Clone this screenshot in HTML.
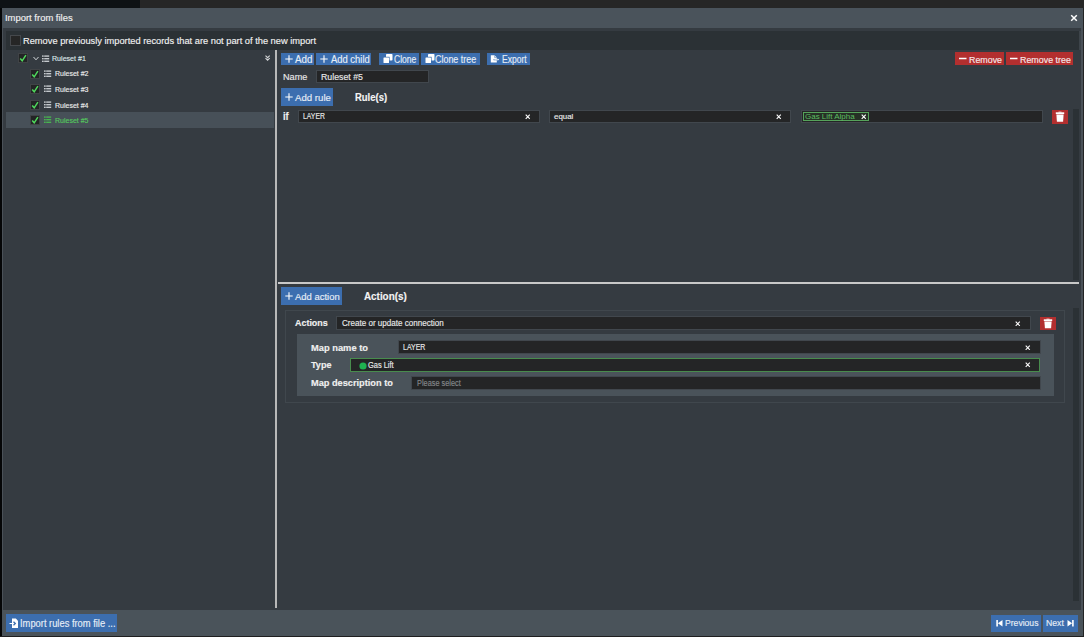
<!DOCTYPE html>
<html><head><meta charset="utf-8">
<style>
*{box-sizing:border-box;margin:0;padding:0}
html,body{width:1084px;height:637px;overflow:hidden;background:#050607;font-family:"Liberation Sans",sans-serif}
.a{position:absolute;display:block}
.t{position:absolute;white-space:nowrap;-webkit-text-stroke-width:0.15px}
</style></head><body>
<div class="a" style="left:0px;top:0px;width:140px;height:8px;background:#0e1215;"></div>
<div class="a" style="left:140px;top:0px;width:944px;height:8px;background:#262626;"></div>
<div class="a" style="left:1083px;top:8px;width:1px;height:629px;background:#232425;"></div>
<div class="a" style="left:2px;top:8px;width:1081px;height:628px;background:#4a5158;"></div>
<div class="a" style="left:2px;top:8px;width:1081px;height:20px;background:#4a535b;"></div>
<div class="t" style="left:5px;top:8px;font-size:9.3px;line-height:20px;color:#f0f0f0;transform:scaleX(1.015);transform-origin:0 0;">Import from files</div>
<svg class="a" style="left:1070px;top:14px;" width="8" height="8" viewBox="0 0 8 8"><path d="M1.2 1.2L6.8 6.8M6.8 1.2L1.2 6.8" stroke="#fff" stroke-width="1.5"/></svg>
<div class="a" style="left:3px;top:28px;width:1078px;height:582px;background:#353b41;"></div>
<div class="a" style="left:6px;top:31px;width:1073px;height:19px;background:#2b3135;"></div>
<div class="a" style="left:1079px;top:31px;width:2px;height:19px;background:#3d444a;"></div>
<div class="a" style="left:10px;top:35px;width:11px;height:11px;background:#45484c;"></div>
<div class="a" style="left:11px;top:36px;width:9px;height:9px;background:#262626;"></div>
<div class="t" style="left:23px;top:31px;font-size:9.4px;line-height:20px;color:#f0f0f0;transform:scaleX(0.990);transform-origin:0 0;">Remove previously imported records that are not part of the new import</div>
<div class="a" style="left:6px;top:112px;width:268px;height:16px;background:#475058;"></div>
<div class="a" style="left:18px;top:53px;width:10px;height:10px;background:#404346;"></div>
<div class="a" style="left:19px;top:54px;width:8px;height:8px;background:#232425;"></div>
<svg class="a" style="left:19px;top:54px;" width="8" height="8" viewBox="0 0 8 8"><path d="M1.2 4.4L3.2 6.8L6.9 1.2" fill="none" stroke="#4fd85c" stroke-width="1.5"/></svg>
<svg class="a" style="left:33px;top:56px;" width="6" height="5" viewBox="0 0 6 5"><path d="M0.5 1L3 3.8L5.5 1" fill="none" stroke="#cfd3d6" stroke-width="1"/></svg>
<svg class="a" style="left:42px;top:55px;" width="8" height="8" viewBox="0 0 8 8"><g fill="#c4c8cc"><rect x="0" y="0.4" width="1.7" height="1.4"/><rect x="2.2" y="0.4" width="5" height="1.4"/><rect x="0" y="3.0" width="1.7" height="1.4"/><rect x="2.2" y="3.0" width="5" height="1.4"/><rect x="0" y="5.6" width="1.7" height="1.4"/><rect x="2.2" y="5.6" width="5" height="1.4"/></g></svg>
<div class="t" style="left:52px;top:49px;font-size:8.1px;line-height:20px;color:#dfe8ea;transform:scaleX(0.875);transform-origin:0 0;">Ruleset #1</div>
<svg class="a" style="left:265px;top:54.5px;" width="6" height="6.5" viewBox="0 0 6 6.5"><path d="M0.5 0.7L2.6 2.7L4.7 0.7M0.5 3.2L2.6 5.2L4.7 3.2" fill="none" stroke="#d4d6d8" stroke-width="1.1"/></svg>
<div class="a" style="left:30px;top:69px;width:10px;height:10px;background:#404346;"></div>
<div class="a" style="left:31px;top:70px;width:8px;height:8px;background:#232425;"></div>
<svg class="a" style="left:31px;top:70px;" width="8" height="8" viewBox="0 0 8 8"><path d="M1.2 4.4L3.2 6.8L6.9 1.2" fill="none" stroke="#4fd85c" stroke-width="1.5"/></svg>
<svg class="a" style="left:44px;top:70px;" width="8" height="8" viewBox="0 0 8 8"><g fill="#c4c8cc"><rect x="0" y="0.4" width="1.7" height="1.4"/><rect x="2.2" y="0.4" width="5" height="1.4"/><rect x="0" y="3.0" width="1.7" height="1.4"/><rect x="2.2" y="3.0" width="5" height="1.4"/><rect x="0" y="5.6" width="1.7" height="1.4"/><rect x="2.2" y="5.6" width="5" height="1.4"/></g></svg>
<div class="t" style="left:55px;top:64px;font-size:8.1px;line-height:20px;color:#ececec;transform:scaleX(0.865);transform-origin:0 0;">Ruleset #2</div>
<div class="a" style="left:30px;top:84px;width:10px;height:10px;background:#404346;"></div>
<div class="a" style="left:31px;top:85px;width:8px;height:8px;background:#232425;"></div>
<svg class="a" style="left:31px;top:85px;" width="8" height="8" viewBox="0 0 8 8"><path d="M1.2 4.4L3.2 6.8L6.9 1.2" fill="none" stroke="#4fd85c" stroke-width="1.5"/></svg>
<svg class="a" style="left:44px;top:85px;" width="8" height="8" viewBox="0 0 8 8"><g fill="#c4c8cc"><rect x="0" y="0.4" width="1.7" height="1.4"/><rect x="2.2" y="0.4" width="5" height="1.4"/><rect x="0" y="3.0" width="1.7" height="1.4"/><rect x="2.2" y="3.0" width="5" height="1.4"/><rect x="0" y="5.6" width="1.7" height="1.4"/><rect x="2.2" y="5.6" width="5" height="1.4"/></g></svg>
<div class="t" style="left:55px;top:80px;font-size:8.1px;line-height:20px;color:#ececec;transform:scaleX(0.865);transform-origin:0 0;">Ruleset #3</div>
<div class="a" style="left:30px;top:100px;width:10px;height:10px;background:#404346;"></div>
<div class="a" style="left:31px;top:101px;width:8px;height:8px;background:#232425;"></div>
<svg class="a" style="left:31px;top:101px;" width="8" height="8" viewBox="0 0 8 8"><path d="M1.2 4.4L3.2 6.8L6.9 1.2" fill="none" stroke="#4fd85c" stroke-width="1.5"/></svg>
<svg class="a" style="left:44px;top:101px;" width="8" height="8" viewBox="0 0 8 8"><g fill="#c4c8cc"><rect x="0" y="0.4" width="1.7" height="1.4"/><rect x="2.2" y="0.4" width="5" height="1.4"/><rect x="0" y="3.0" width="1.7" height="1.4"/><rect x="2.2" y="3.0" width="5" height="1.4"/><rect x="0" y="5.6" width="1.7" height="1.4"/><rect x="2.2" y="5.6" width="5" height="1.4"/></g></svg>
<div class="t" style="left:55px;top:96px;font-size:8.1px;line-height:20px;color:#ececec;transform:scaleX(0.865);transform-origin:0 0;">Ruleset #4</div>
<div class="a" style="left:30px;top:115px;width:10px;height:10px;background:#404346;"></div>
<div class="a" style="left:31px;top:116px;width:8px;height:8px;background:#232425;"></div>
<svg class="a" style="left:31px;top:116px;" width="8" height="8" viewBox="0 0 8 8"><path d="M1.2 4.4L3.2 6.8L6.9 1.2" fill="none" stroke="#4fd85c" stroke-width="1.5"/></svg>
<svg class="a" style="left:44px;top:116px;" width="8" height="8" viewBox="0 0 8 8"><g fill="#48b250"><rect x="0" y="0.4" width="1.7" height="1.4"/><rect x="2.2" y="0.4" width="5" height="1.4"/><rect x="0" y="3.0" width="1.7" height="1.4"/><rect x="2.2" y="3.0" width="5" height="1.4"/><rect x="0" y="5.6" width="1.7" height="1.4"/><rect x="2.2" y="5.6" width="5" height="1.4"/></g></svg>
<div class="t" style="left:55px;top:111px;font-size:8.1px;line-height:20px;color:#55c95e;transform:scaleX(0.865);transform-origin:0 0;">Ruleset #5</div>
<div class="a" style="left:275px;top:50px;width:2px;height:558px;background:#b8b8b8;"></div>
<div class="a" style="left:281px;top:53px;width:33px;height:12px;background:#3c6eaf;"></div>
<svg class="a" style="left:285px;top:54.5px;" width="8" height="8" viewBox="0 0 8 8"><path d="M4 0.3V7.7M0.3 4H7.7" stroke="#fff" stroke-width="1.1"/></svg>
<div class="t" style="left:295px;top:50px;font-size:10px;line-height:20px;color:#e6edf6;transform:scaleX(0.981);transform-origin:0 0;">Add</div>
<div class="a" style="left:316px;top:53px;width:55px;height:12px;background:#3c6eaf;"></div>
<svg class="a" style="left:320px;top:54.5px;" width="8" height="8" viewBox="0 0 8 8"><path d="M4 0.3V7.7M0.3 4H7.7" stroke="#fff" stroke-width="1.1"/></svg>
<div class="t" style="left:330.5px;top:50px;font-size:10px;line-height:20px;color:#e6edf6;transform:scaleX(0.941);transform-origin:0 0;">Add child</div>
<div class="a" style="left:379px;top:53px;width:40px;height:12px;background:#3c6eaf;"></div>
<svg class="a" style="left:382.5px;top:54px;" width="10" height="10" viewBox="0 0 10 10"><rect x="3" y="0" width="6.5" height="6.5" rx="0.8" fill="#fff"/><rect x="-0.2" y="2.8" width="6.8" height="6.8" fill="#3c6eaf"/><rect x="0.5" y="3.5" width="5.5" height="5.5" rx="0.5" fill="#fff"/></svg>
<div class="t" style="left:394px;top:50px;font-size:10px;line-height:20px;color:#e6edf6;transform:scaleX(0.854);transform-origin:0 0;">Clone</div>
<div class="a" style="left:421px;top:53px;width:59px;height:12px;background:#3c6eaf;"></div>
<svg class="a" style="left:424.5px;top:54px;" width="10" height="10" viewBox="0 0 10 10"><rect x="3" y="0" width="6.5" height="6.5" rx="0.8" fill="#fff"/><rect x="-0.2" y="2.8" width="6.8" height="6.8" fill="#3c6eaf"/><rect x="0.5" y="3.5" width="5.5" height="5.5" rx="0.5" fill="#fff"/></svg>
<div class="t" style="left:435px;top:50px;font-size:10px;line-height:20px;color:#e6edf6;transform:scaleX(0.893);transform-origin:0 0;">Clone tree</div>
<div class="a" style="left:487px;top:53px;width:43px;height:12px;background:#3c6eaf;"></div>
<svg class="a" style="left:490px;top:54.5px;" width="10" height="8" viewBox="0 0 10 8"><path d="M0.8 0.3H4.6L6.8 2.5V7.6H0.8Z" fill="#fff"/><path d="M4.6 0.3V2.5H6.8" fill="none" stroke="#3c6eaf" stroke-width="0.5"/><path d="M3.6 4.6H7.4" stroke="#3c6eaf" stroke-width="1.3"/><path d="M4.2 4.6H7.8" stroke="#fff" stroke-width="0.8"/><path d="M7.6 3.4L9.2 4.6L7.6 5.8Z" fill="#fff"/></svg>
<div class="t" style="left:502px;top:50px;font-size:10px;line-height:20px;color:#e6edf6;transform:scaleX(0.855);transform-origin:0 0;">Export</div>
<div class="a" style="left:955px;top:52px;width:49px;height:13px;background:#b32f2f;"></div>
<svg class="a" style="left:959px;top:57px;" width="8" height="3" viewBox="0 0 8 3"><path d="M0 1.5H7.5" stroke="#fff" stroke-width="1.5"/></svg>
<div class="t" style="left:968.7px;top:50px;font-size:9.6px;line-height:20px;color:#f6e9e9;transform:scaleX(0.924);transform-origin:0 0;">Remove</div>
<div class="a" style="left:1006px;top:52px;width:67px;height:13px;background:#b32f2f;"></div>
<svg class="a" style="left:1010px;top:57px;" width="8" height="3" viewBox="0 0 8 3"><path d="M0 1.5H7.5" stroke="#fff" stroke-width="1.5"/></svg>
<div class="t" style="left:1020px;top:50px;font-size:9.6px;line-height:20px;color:#f6e9e9;transform:scaleX(0.927);transform-origin:0 0;">Remove tree</div>
<div class="t" style="left:282.6px;top:67px;font-size:9px;line-height:20px;color:#e8e8e8;transform:scaleX(1.012);transform-origin:0 0;">Name</div>
<div class="a" style="left:316px;top:70px;width:112.5px;height:13px;background:#41474d;"></div>
<div class="a" style="left:317px;top:71px;width:110.5px;height:11px;background:#242526;"></div>
<div class="t" style="left:320.8px;top:67px;font-size:9px;line-height:20px;color:#e8e8e8;transform:scaleX(0.976);transform-origin:0 0;">Ruleset #5</div>
<div class="a" style="left:281px;top:88px;width:52px;height:18px;background:#3c6eaf;"></div>
<svg class="a" style="left:285px;top:93px;" width="8" height="8" viewBox="0 0 8 8"><path d="M4 0.3V7.7M0.3 4H7.7" stroke="#fff" stroke-width="1.1"/></svg>
<div class="t" style="left:294.9px;top:88px;font-size:9.7px;line-height:20px;color:#e6edf6;transform:scaleX(0.995);transform-origin:0 0;">Add rule</div>
<div class="t" style="left:354.7px;top:87px;font-size:10.7px;line-height:20px;color:#f4f4f4;font-weight:bold;transform:scaleX(0.886);transform-origin:0 0;">Rule(s)</div>
<div class="t" style="left:282.7px;top:107px;font-size:10px;line-height:20px;color:#f0f0f0;font-weight:bold;transform:scaleX(0.929);transform-origin:0 0;">if</div>
<div class="a" style="left:298px;top:110px;width:242px;height:13px;background:#41474d;"></div>
<div class="a" style="left:299px;top:111px;width:240px;height:11px;background:#242526;"></div>
<div class="t" style="left:303.4px;top:106px;font-size:8.4px;line-height:20px;color:#e8e8e8;transform:scaleX(0.814);transform-origin:0 0;">LAYER</div>
<svg class="a" style="left:524.5px;top:114px;" width="5.5" height="5.5" viewBox="0 0 5.5 5.5"><path d="M0.7 0.7L4.8 4.8M4.8 0.7L0.7 4.8" stroke="#fff" stroke-width="1.1"/></svg>
<div class="a" style="left:549px;top:110px;width:242px;height:13px;background:#41474d;"></div>
<div class="a" style="left:550px;top:111px;width:240px;height:11px;background:#242526;"></div>
<div class="t" style="left:554.4px;top:107px;font-size:8.0px;line-height:20px;color:#e8e8e8;transform:scaleX(0.990);transform-origin:0 0;">equal</div>
<svg class="a" style="left:776px;top:114px;" width="5.5" height="5.5" viewBox="0 0 5.5 5.5"><path d="M0.7 0.7L4.8 4.8M4.8 0.7L0.7 4.8" stroke="#fff" stroke-width="1.1"/></svg>
<div class="a" style="left:801px;top:110px;width:242px;height:13px;background:#41474d;"></div>
<div class="a" style="left:802px;top:111px;width:240px;height:11px;background:#242526;"></div>
<div class="a" style="left:803px;top:111.5px;width:66px;height:9.5px;background:#56a35b;"></div>
<div class="a" style="left:804px;top:112.5px;width:64px;height:7.5px;background:#263026;"></div>
<div class="t" style="left:805px;top:107px;font-size:7.8px;line-height:20px;color:#5dbd63;-webkit-text-stroke-width:0;transform:scaleX(1.023);transform-origin:0 0;">Gas Lift Alpha</div>
<svg class="a" style="left:860.5px;top:114px;" width="5.5" height="5.5" viewBox="0 0 5.5 5.5"><path d="M0.7 0.7L4.8 4.8M4.8 0.7L0.7 4.8" stroke="#fff" stroke-width="1.1"/></svg>
<div class="a" style="left:1052px;top:110px;width:16px;height:14px;background:#b32f2f;"></div>
<svg class="a" style="left:1052px;top:110px;" width="16" height="14" viewBox="0 0 16 14"><path d="M3.7999999999999545 2.3H12.200000000000045V4.1H3.7999999999999545Z" fill="#fff"/><path d="M6.5 1.7H9.5V2.5H6.5Z" fill="#fff"/><path d="M4.400000000000091 4.4H11.599999999999909L11.099999999999909 11.8H4.900000000000091Z" fill="#fff"/></svg>
<div class="a" style="left:1073px;top:109px;width:6px;height:171px;background:#2b3135;"></div>
<div class="a" style="left:278px;top:282px;width:801px;height:2px;background:#c8c8c8;"></div>
<div class="a" style="left:281px;top:287px;width:61px;height:18px;background:#3c6eaf;"></div>
<svg class="a" style="left:285px;top:292px;" width="8" height="8" viewBox="0 0 8 8"><path d="M4 0.3V7.7M0.3 4H7.7" stroke="#fff" stroke-width="1.1"/></svg>
<div class="t" style="left:294.9px;top:287px;font-size:9.7px;line-height:20px;color:#e6edf6;transform:scaleX(0.976);transform-origin:0 0;">Add action</div>
<div class="t" style="left:364px;top:286px;font-size:11px;line-height:20px;color:#f4f4f4;font-weight:bold;transform:scaleX(0.896);transform-origin:0 0;">Action(s)</div>
<div class="a" style="left:285px;top:310px;width:780px;height:93px;background:#40474d;"></div>
<div class="a" style="left:286px;top:311px;width:778px;height:91px;background:#353b41;"></div>
<div class="t" style="left:294.7px;top:313px;font-size:9.7px;line-height:20px;color:#f0f0f0;font-weight:bold;transform:scaleX(0.922);transform-origin:0 0;">Actions</div>
<div class="a" style="left:336px;top:316px;width:695px;height:14px;background:#41474d;"></div>
<div class="a" style="left:337px;top:317px;width:693px;height:12px;background:#242526;"></div>
<div class="t" style="left:341.5px;top:313px;font-size:9px;line-height:20px;color:#e8e8e8;transform:scaleX(0.895);transform-origin:0 0;">Create or update connection</div>
<svg class="a" style="left:1015px;top:320.5px;" width="5.5" height="5.5" viewBox="0 0 5.5 5.5"><path d="M0.7 0.7L4.8 4.8M4.8 0.7L0.7 4.8" stroke="#fff" stroke-width="1.1"/></svg>
<div class="a" style="left:1040px;top:316.5px;width:16px;height:13.5px;background:#b32f2f;"></div>
<svg class="a" style="left:1040px;top:316.5px;" width="16" height="13.5" viewBox="0 0 16 13.5"><path d="M3.7999999999999545 2.3H12.200000000000045V4.1H3.7999999999999545Z" fill="#fff"/><path d="M6.5 1.7H9.5V2.5H6.5Z" fill="#fff"/><path d="M4.400000000000091 4.4H11.599999999999909L11.099999999999909 11.3H4.900000000000091Z" fill="#fff"/></svg>
<div class="a" style="left:297px;top:334px;width:757px;height:62px;background:#4a535a;"></div>
<div class="t" style="left:311px;top:338px;font-size:9.4px;line-height:20px;color:#f0f0f0;font-weight:bold;transform:scaleX(0.994);transform-origin:0 0;">Map name to</div>
<div class="a" style="left:398px;top:340px;width:643px;height:14px;background:#41474d;"></div>
<div class="a" style="left:399px;top:341px;width:641px;height:12px;background:#242526;"></div>
<div class="t" style="left:403.1px;top:337px;font-size:8.6px;line-height:20px;color:#e8e8e8;transform:scaleX(0.812);transform-origin:0 0;">LAYER</div>
<svg class="a" style="left:1025px;top:344.5px;" width="5.5" height="5.5" viewBox="0 0 5.5 5.5"><path d="M0.7 0.7L4.8 4.8M4.8 0.7L0.7 4.8" stroke="#fff" stroke-width="1.1"/></svg>
<div class="t" style="left:311px;top:355px;font-size:9.4px;line-height:20px;color:#f0f0f0;font-weight:bold;transform:scaleX(0.968);transform-origin:0 0;">Type</div>
<div class="a" style="left:350px;top:358px;width:690px;height:14px;background:#488c4d;"></div>
<div class="a" style="left:351px;top:359px;width:688px;height:12px;background:#242526;"></div>
<svg class="a" style="left:358.5px;top:361.5px;" width="8" height="8" viewBox="0 0 8 8"><circle cx="4" cy="4" r="3.6" fill="#1eb050"/></svg>
<div class="t" style="left:367.7px;top:356px;font-size:8.2px;line-height:20px;color:#e8e8e8;transform:scaleX(0.909);transform-origin:0 0;">Gas Lift</div>
<svg class="a" style="left:1025px;top:362px;" width="5.5" height="5.5" viewBox="0 0 5.5 5.5"><path d="M0.7 0.7L4.8 4.8M4.8 0.7L0.7 4.8" stroke="#fff" stroke-width="1.1"/></svg>
<div class="t" style="left:311px;top:373px;font-size:9.4px;line-height:20px;color:#f0f0f0;font-weight:bold;transform:scaleX(0.982);transform-origin:0 0;">Map description to</div>
<div class="a" style="left:411px;top:376px;width:630px;height:14px;background:#41474d;"></div>
<div class="a" style="left:412px;top:377px;width:628px;height:12px;background:#242526;"></div>
<div class="t" style="left:416.9px;top:373px;font-size:8.5px;line-height:20px;color:#85888b;transform:scaleX(0.865);transform-origin:0 0;">Please select</div>
<div class="a" style="left:1073px;top:308px;width:6px;height:293px;background:#2b3135;"></div>
<div class="a" style="left:2px;top:610px;width:1081px;height:26px;background:#4a535a;"></div>
<div class="a" style="left:6px;top:614px;width:111px;height:18px;background:#3c6eaf;"></div>
<svg class="a" style="left:9px;top:618px;" width="11" height="11" viewBox="0 0 11 11"><path d="M3 0.5H6.8L9 2.7V10H3Z" fill="#fff"/><path d="M0.5 5.5H6" stroke="#fff" stroke-width="1"/><path d="M4.5 3.8L6.3 5.5L4.5 7.2" fill="none" stroke="#3c6eaf" stroke-width="1.3"/></svg>
<div class="t" style="left:19.8px;top:614px;font-size:10.4px;line-height:20px;color:#e6edf6;transform:scaleX(0.899);transform-origin:0 0;">Import rules from file ...</div>
<div class="a" style="left:991px;top:614.5px;width:50px;height:17.5px;background:#3c6eaf;"></div>
<svg class="a" style="left:995.5px;top:620px;" width="7" height="7" viewBox="0 0 7 7"><rect x="0.3" y="0" width="1.6" height="6.5" fill="#fff"/><path d="M6.5 0V6.5L1.9 3.25Z" fill="#fff"/></svg>
<div class="t" style="left:1004.8px;top:613px;font-size:9px;line-height:20px;color:#e6edf6;transform:scaleX(0.955);transform-origin:0 0;">Previous</div>
<div class="a" style="left:1043px;top:614.5px;width:35px;height:17.5px;background:#3c6eaf;"></div>
<div class="t" style="left:1046px;top:613px;font-size:9px;line-height:20px;color:#e6edf6;transform:scaleX(0.963);transform-origin:0 0;">Next</div>
<svg class="a" style="left:1066.5px;top:620px;" width="7" height="7" viewBox="0 0 7 7"><rect x="5.1" y="0" width="1.6" height="6.5" fill="#fff"/><path d="M0.5 0V6.5L5.1 3.25Z" fill="#fff"/></svg>
<div class="a" style="left:0px;top:636px;width:1084px;height:1px;background:#1f1f20;"></div>
</body></html>
